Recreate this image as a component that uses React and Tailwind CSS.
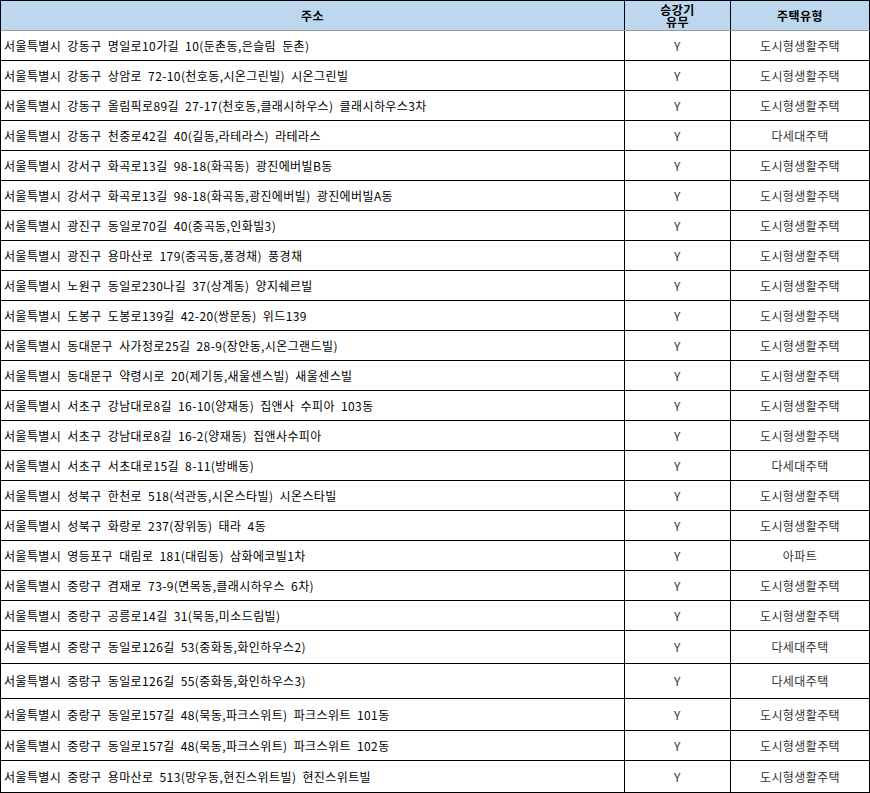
import React from "react";

const rows = [
  ["서울특별시 강동구 명일로10가길 10(둔촌동,은슬림 둔촌)", "도시형생활주택", "h-[30px]"],
  ["서울특별시 강동구 상암로 72-10(천호동,시온그린빌) 시온그린빌", "도시형생활주택", "h-[30px]"],
  ["서울특별시 강동구 올림픽로89길 27-17(천호동,클래시하우스) 클래시하우스3차", "도시형생활주택", "h-[30px]"],
  ["서울특별시 강동구 천중로42길 40(길동,라테라스) 라테라스", "다세대주택", "h-[30px]"],
  ["서울특별시 강서구 화곡로13길 98-18(화곡동) 광진에버빌B동", "도시형생활주택", "h-[30px]"],
  ["서울특별시 강서구 화곡로13길 98-18(화곡동,광진에버빌) 광진에버빌A동", "도시형생활주택", "h-[30px]"],
  ["서울특별시 광진구 동일로70길 40(중곡동,인화빌3)", "도시형생활주택", "h-[30px]"],
  ["서울특별시 광진구 용마산로 179(중곡동,풍경채) 풍경채", "도시형생활주택", "h-[30px]"],
  ["서울특별시 노원구 동일로230나길 37(상계동) 양지쉐르빌", "도시형생활주택", "h-[30px]"],
  ["서울특별시 도봉구 도봉로139길 42-20(쌍문동) 위드139", "도시형생활주택", "h-[30px]"],
  ["서울특별시 동대문구 사가정로25길 28-9(장안동,시온그랜드빌)", "도시형생활주택", "h-[30px]"],
  ["서울특별시 동대문구 약령시로 20(제기동,새울센스빌) 새울센스빌", "도시형생활주택", "h-[30px]"],
  ["서울특별시 서초구 강남대로8길 16-10(양재동) 집앤사 수피아 103동", "도시형생활주택", "h-[30px]"],
  ["서울특별시 서초구 강남대로8길 16-2(양재동) 집앤사수피아", "도시형생활주택", "h-[30px]"],
  ["서울특별시 서초구 서초대로15길 8-11(방배동)", "다세대주택", "h-[30px]"],
  ["서울특별시 성북구 한천로 518(석관동,시온스타빌) 시온스타빌", "도시형생활주택", "h-[30px]"],
  ["서울특별시 성북구 화랑로 237(장위동) 태라 4동", "도시형생활주택", "h-[30px]"],
  ["서울특별시 영등포구 대림로 181(대림동) 삼화에코빌1차", "아파트", "h-[30px]"],
  ["서울특별시 중랑구 겸재로 73-9(면목동,클래시하우스 6차)", "도시형생활주택", "h-[30px]"],
  ["서울특별시 중랑구 공릉로14길 31(묵동,미소드림빌)", "도시형생활주택", "h-[30px]"],
  ["서울특별시 중랑구 동일로126길 53(중화동,화인하우스2)", "다세대주택", "h-[33px]"],
  ["서울특별시 중랑구 동일로126길 55(중화동,화인하우스3)", "다세대주택", "h-[35px]"],
  ["서울특별시 중랑구 동일로157길 48(묵동,파크스위트) 파크스위트 101동", "도시형생활주택", "h-[32px]"],
  ["서울특별시 중랑구 동일로157길 48(묵동,파크스위트) 파크스위트 102동", "도시형생활주택", "h-[30px]"],
  ["서울특별시 중랑구 용마산로 513(망우동,현진스위트빌) 현진스위트빌", "도시형생활주택", "h-[32px]"],
];

export default function App() {
  return (
    <div
      className="w-[870px] bg-white text-[12px] text-black tracking-[0.4px]"
      style={{ fontFamily: '"Noto Sans CJK KR", "Noto Sans", sans-serif' }}
    >
      <div className="border-l border-t border-black">
        <div className="flex h-[30px] bg-[#bdd7ee] border-b border-[#9a9a9a] font-bold">
          <div className="w-[624px] border-r border-black flex items-center justify-center leading-[14px]">주소</div>
          <div className="w-[106px] border-r border-black flex flex-col items-center justify-center leading-[12px]">
            <span>승강기</span>
            <span>유무</span>
          </div>
          <div className="w-[139px] border-r border-black flex items-center justify-center leading-[14px]">주택유형</div>
        </div>
        {rows.map(([addr, type, h], i) => (
          <div key={i} className={`flex ${h} border-b border-black`}>
            <div className="w-[624px] border-r border-black flex items-center pl-[3px] whitespace-nowrap overflow-hidden [word-spacing:3px]">
              {addr}
            </div>
            <div className="w-[106px] border-r border-black flex items-center justify-center text-[#333]">Y</div>
            <div className="w-[139px] border-r border-black flex items-center justify-center text-[#333]">{type}</div>
          </div>
        ))}
      </div>
    </div>
  );
}
